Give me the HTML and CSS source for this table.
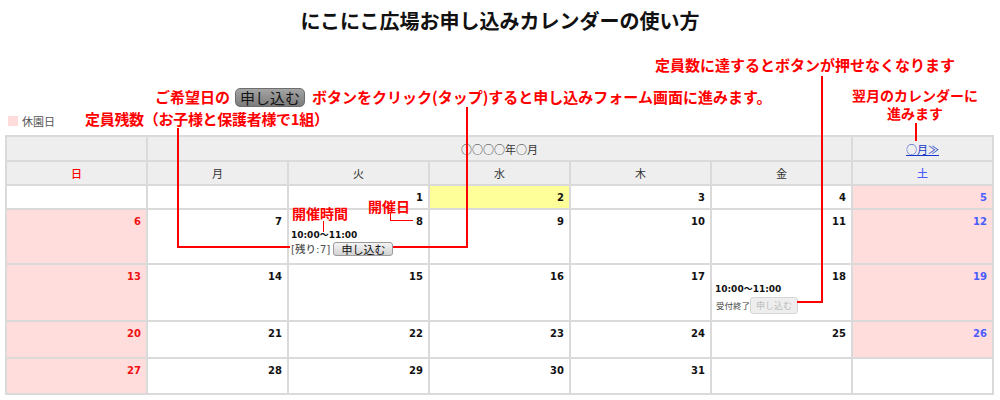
FILE: index.html
```html
<!DOCTYPE html>
<html lang="ja">
<head>
<meta charset="utf-8">
<title>にこにこ広場お申し込みカレンダーの使い方</title>
<link rel="stylesheet" href="styles.css">
</head>
<body>
<div class="sheet">
  <h1 class="title">にこにこ広場お申し込みカレンダーの使い方</h1>
  <div class="legend"><span class="swatch"></span><span>休園日</span></div>
  <table class="cal">
    <colgroup><col><col><col><col><col><col><col></colgroup>
    <thead>
      <tr class="h-month"><th></th><th colspan="5">○○○○年○月</th><th><a href="#" class="next">○月≫</a></th></tr>
      <tr class="h-week"><th class="wd-sun">日</th><th>月</th><th>火</th><th>水</th><th>木</th><th>金</th><th class="wd-sat">土</th></tr>
    </thead>
    <tbody>
      <tr class="r1">
        <td></td><td></td>
        <td><div class="num">1</div></td>
        <td class="today"><div class="num">2</div></td>
        <td><div class="num">3</div></td>
        <td><div class="num">4</div></td>
        <td class="off sat"><div class="num">5</div></td>
      </tr>
      <tr class="r2">
        <td class="off sun"><div class="num">6</div></td>
        <td><div class="num">7</div></td>
        <td>
          <div class="num">8</div>
          <div class="ev">
            <div class="time">10:00～11:00</div>
            <div class="act"><span class="rest">[残り:7]</span><button class="apply" type="button">申し込む</button></div>
          </div>
        </td>
        <td><div class="num">9</div></td>
        <td><div class="num">10</div></td>
        <td><div class="num">11</div></td>
        <td class="off sat"><div class="num">12</div></td>
      </tr>
      <tr class="r3">
        <td class="off sun"><div class="num">13</div></td>
        <td><div class="num">14</div></td>
        <td><div class="num">15</div></td>
        <td><div class="num">16</div></td>
        <td><div class="num">17</div></td>
        <td>
          <div class="num">18</div>
          <div class="ev ev-closed">
            <div class="time">10:00～11:00</div>
            <div class="act"><span class="closed">受付終了</span><button class="apply" type="button" disabled>申し込む</button></div>
          </div>
        </td>
        <td class="off sat"><div class="num">19</div></td>
      </tr>
      <tr class="r4">
        <td class="off sun"><div class="num">20</div></td>
        <td><div class="num">21</div></td>
        <td><div class="num">22</div></td>
        <td><div class="num">23</div></td>
        <td><div class="num">24</div></td>
        <td><div class="num">25</div></td>
        <td class="off sat"><div class="num">26</div></td>
      </tr>
      <tr class="r5">
        <td class="off sun"><div class="num">27</div></td>
        <td><div class="num">28</div></td>
        <td><div class="num">29</div></td>
        <td><div class="num">30</div></td>
        <td><div class="num">31</div></td>
        <td></td><td></td>
      </tr>
    </tbody>
  </table>

  <div class="note note-full">定員数に達するとボタンが押せなくなります</div>
  <div class="note note-click">ご希望日の<span class="fake-btn">申し込む</span>ボタンをクリック(タップ)すると申し込みフォーム画面に進みます。</div>
  <div class="note note-next"><div>翌月のカレンダーに</div><div>進みます</div></div>
  <div class="note note-left">定員残数（お子様と保護者様で1組）</div>
  <div class="note note-time">開催時間</div>
  <div class="note note-day">開催日</div>

  <div class="ln ln-left"></div>
  <div class="ln ln-click"></div>
  <div class="ln ln-full"></div>
  <div class="ln ln-next"></div>
  <div class="ln ln-time"></div>
  <div class="ln ln-day"></div>
</div>
</body>
</html>
```

FILE: styles.css
```css
* { box-sizing: border-box; }

html, body {
  margin: 0;
  padding: 0;
  background: #ffffff;
}

body {
  font-family: "Noto Sans CJK JP", "Noto Sans", sans-serif;
  color: #222;
}

.sheet {
  position: relative;
  width: 1000px;
  height: 400px;
  overflow: hidden;
}

.title {
  margin: 0;
  height: 40px;
  line-height: 41px;
  text-align: center;
  font-size: 20px;
  font-weight: 700;
  color: #111;
}

.legend {
  margin: 74px 0 0 8px;
  height: 14px;
  display: flex;
  align-items: center;
  gap: 4px;
  font-size: 11px;
  line-height: 14px;
  color: #555;
}

.swatch {
  width: 10px;
  height: 10px;
  background: #ffdcdc;
}

.cal {
  margin: 7px 0 0 5px;
  width: 989px;
  border-collapse: collapse;
  table-layout: fixed;
  font-size: 11px;
}

.cal th,
.cal td {
  border: 2px solid #dadada;
  padding: 0;
}

.cal th {
  background: #eeeeee;
  font-weight: 400;
  color: #333;
  text-align: center;
  vertical-align: middle;
}

.h-month { height: 25px; }
.h-week { height: 24px; }

.cal th.wd-sun { color: #ff0000; font-weight: 500; }
.cal th.wd-sat { color: #4a5cff; font-weight: 500; }

.next {
  color: #1638c8;
  text-decoration: underline;
}

.cal td {
  vertical-align: top;
  background: #ffffff;
}

.cal td.off { background: #ffdddd; }
.cal td.today { background: #ffff99; }

.r1 { height: 24px; }
.r2 { height: 55px; }
.r3 { height: 57px; }
.r4 { height: 37px; }
.r5 { height: 36px; }

.num {
  text-align: right;
  padding: 5px 5px 0 0;
  font-family: "DejaVu Sans", sans-serif;
  font-weight: 700;
  font-size: 10px;
  line-height: 13px;
  color: #111;
}

.sun .num { color: #ee1111; }
.sat .num { color: #4a5cff; }

.ev {
  padding: 1px 0 0 2px;
}

.time {
  font-family: "DejaVu Sans", "Noto Sans CJK JP", sans-serif;
  font-weight: 700;
  font-size: 9px;
  line-height: 12px;
  color: #111;
}

.act {
  display: flex;
  align-items: center;
  gap: 3px;
  margin-top: 1px;
}

.rest {
  font-family: "DejaVu Sans", "Noto Sans CJK JP", sans-serif;
  font-size: 10.5px;
  font-weight: 500;
  color: #555;
  line-height: 14px;
}

.apply {
  width: 60px;
  height: 14px;
  padding: 0;
  border: 1px solid #9c9c9c;
  border-radius: 3px;
  background: linear-gradient(#f4f4f4, #d2d2d2);
  font-family: "Noto Sans CJK JP", sans-serif;
  font-size: 11px;
  line-height: 12px;
  color: #111;
}

.ev-closed { padding-left: 3px; padding-top: 0; }

.ev-closed .act { gap: 0; margin-top: 2px; }

.closed {
  font-size: 8.5px;
  color: #444;
  line-height: 17px;
  padding-left: 1px;
}

.apply:disabled {
  width: 48px;
  height: 17px;
  border: 1px solid #d6d6d6;
  background: #eeeeee;
  color: #bdbdbd;
  font-size: 9px;
}

/* annotations overlay */
.note {
  position: absolute;
  color: #ff0000;
  font-weight: 700;
  font-size: 15px;
  line-height: 18px;
  white-space: nowrap;
}

.note-full { left: 655px; top: 56px; }
.note-click { left: 155px; top: 88px; }
.note-next {
  left: 845px;
  top: 87px;
  width: 140px;
  text-align: center;
  font-size: 14px;
  line-height: 17px;
}
.note-next div + div { margin-top: 1px; }
.note-left { left: 85px; top: 110px; letter-spacing: -0.3px; }
.note-time { left: 292px; top: 204px; font-size: 14px; }
.note-day { left: 368px; top: 197px; font-size: 14px; }

.fake-btn {
  display: inline-block;
  margin: 0 7px 0 5px;
  padding: 0 4px;
  height: 19px;
  line-height: 18px;
  vertical-align: -1px;
  border: 1px solid #6e6e6e;
  border-radius: 5px;
  background: linear-gradient(#a4a4a4, #7c7c7c);
  color: #151515;
  font-weight: 400;
  font-size: 15px;
}

.ln {
  position: absolute;
  border-color: #ff0000;
  border-style: solid;
  border-width: 0;
}

.ln-left {
  left: 177px; top: 128px;
  width: 113px; height: 120px;
  border-left-width: 2px; border-bottom-width: 2px;
}

.ln-click {
  left: 393px; top: 107px;
  width: 75px; height: 141px;
  border-right-width: 2px; border-bottom-width: 2px;
}

.ln-full {
  left: 797px; top: 76px;
  width: 26px; height: 227px;
  border-right-width: 2px; border-bottom-width: 2px;
}

.ln-next {
  left: 915px; top: 123px;
  width: 2px; height: 18px;
  border-left-width: 2px;
}

.ln-time {
  left: 323px; top: 221px;
  width: 1px; height: 11px;
  border-left-width: 1px;
}

.ln-day {
  left: 390px; top: 212px;
  width: 23px; height: 9px;
  border-left-width: 1px; border-bottom-width: 1px;
}
```
